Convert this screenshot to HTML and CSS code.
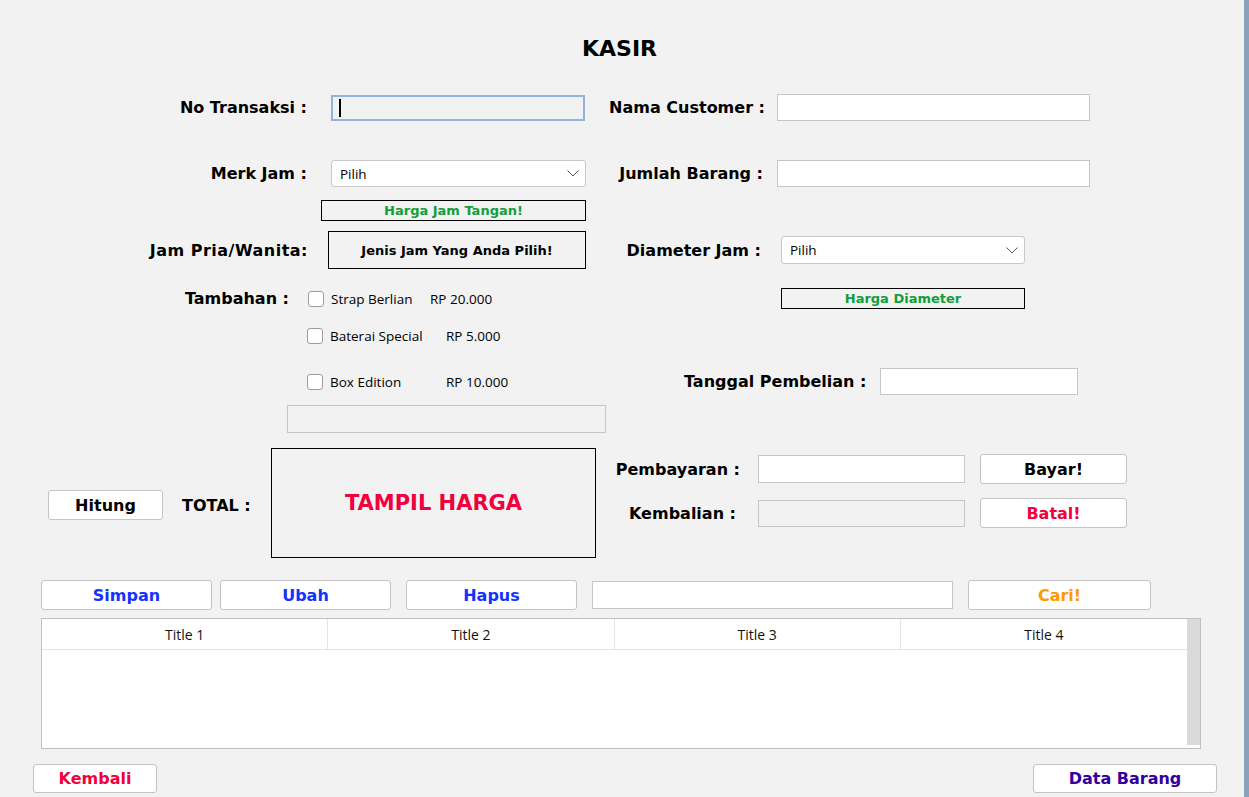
FILE: index.html
```html
<!DOCTYPE html>
<html lang="id">
<head>
<meta charset="utf-8">
<title>Kasir</title>
<link rel="stylesheet" href="styles.css">
</head>
<body>
<div class="window">
  <div class="title">KASIR</div>

  <div class="row r1">
    <div class="lbl w307">No Transaksi :</div>
    <div class="field focused g24 w254 h26"><span class="caret"></span></div>
    <div class="lbl w180">Nama Customer :</div>
    <div class="field g12 w313 h27"></div>
  </div>

  <div class="row r2">
    <div class="lbl w307">Merk Jam :</div>
    <div class="select g24 w255 h27"><span>Pilih</span><svg width="12" height="7" viewBox="0 0 12 7"><polyline points="0.5,0.5 6,6 11.5,0.5" fill="none" stroke="#555" stroke-width="1"/></svg></div>
    <div class="lbl w177">Jumlah Barang :</div>
    <div class="field g14 w313 h27"></div>
  </div>

  <div class="row r2b">
    <div class="info green w265 h21">Harga Jam Tangan!</div>
  </div>

  <div class="row r3">
    <div class="lbl wide w308">Jam Pria/Wanita:</div>
    <div class="info g20 w258 h38">Jenis Jam Yang Anda Pilih!</div>
    <div class="lbl w175">Diameter Jam :</div>
    <div class="select g20 w244 h28"><span>Pilih</span><svg width="12" height="7" viewBox="0 0 12 7"><polyline points="0.5,0.5 6,6 11.5,0.5" fill="none" stroke="#555" stroke-width="1"/></svg></div>
  </div>

  <div class="row r4">
    <div class="zone781">
      <div class="lbl w289">Tambahan :</div>
      <div class="check c1"><span class="box"></span><span class="name n99">Strap Berlian</span><span class="price">RP 20.000</span></div>
    </div>
    <div class="info green w244 h21">Harga Diameter</div>
  </div>

  <div class="row r5">
    <div class="check c2"><span class="box"></span><span class="name n116">Baterai Special</span><span class="price">RP 5.000</span></div>
  </div>

  <div class="row r6">
    <div class="zone684">
      <div class="check c2"><span class="box"></span><span class="name n116">Box Edition</span><span class="price">RP 10.000</span></div>
    </div>
    <div class="lbl w182">Tanggal Pembelian :</div>
    <div class="field g14 w198 h27"></div>
  </div>

  <div class="row r7">
    <div class="field disabled w319 h28"></div>
  </div>

  <div class="row r8">
    <button class="btn low w115 h30">Hitung</button>
    <div class="lbl-l low w89">TOTAL :</div>
    <div class="info big red w325 h110">TAMPIL HARGA</div>
    <div class="paycol">
      <div class="payrow">
        <div class="lbl w144">Pembayaran :</div>
        <div class="field g18 w207 h28"></div>
        <button class="btn g15 w147 h30">Bayar!</button>
      </div>
      <div class="payrow pr2">
        <div class="lbl w140">Kembalian :</div>
        <div class="field disabled g22 w207 h27"></div>
        <button class="btn red g15 w147 h30">Batal!</button>
      </div>
    </div>
  </div>

  <div class="row r9">
    <button class="btn blue w171 h30">Simpan</button>
    <button class="btn blue g8 w171 h30">Ubah</button>
    <button class="btn blue g15 w171 h30">Hapus</button>
    <div class="field g15 w361 h28"></div>
    <button class="btn orange g15 w183 h30">Cari!</button>
  </div>

  <div class="table">
    <div class="tmain">
      <div class="thead">
        <div class="th">Title 1</div>
        <div class="th">Title 2</div>
        <div class="th">Title 3</div>
        <div class="th">Title 4</div>
      </div>
    </div>
    <div class="scroll"></div>
  </div>

  <div class="row bottom">
    <button class="btn red w124 h29">Kembali</button>
    <button class="btn purple w184 h29">Data Barang</button>
  </div>
</div>
</body>
</html>
```

FILE: styles.css
```css
* { box-sizing: border-box; }
html, body { margin: 0; padding: 0; }
body { background: #f2f2f2; width: 1249px; height: 797px; overflow: hidden; }

.window {
  width: 1249px;
  height: 797px;
  background: #f2f2f2;
  border-right: 5px solid #89a3bb;
  display: flex;
  flex-direction: column;
  font-family: "DejaVu Sans", Verdana, sans-serif;
  color: #000;
}

.title {
  margin-top: 36px;
  height: 26px;
  line-height: 26px;
  text-align: center;
  font-weight: bold;
  font-size: 22px;
  padding-right: 5px;
}

.row { display: flex; align-items: center; flex: none; }
.r1 { margin-top: 32px; height: 27px; }
.r2 { margin-top: 39px; height: 27px; }
.r2b { margin-top: 13px; height: 21px; padding-left: 321px; }
.r3 { margin-top: 10px; height: 38px; }
.r4 { margin-top: 19px; height: 21px; }
.r5 { margin-top: 18px; height: 17px; padding-left: 307px; }
.r6 { margin-top: 24px; height: 27px; }
.r7 { margin-top: 10px; height: 28px; padding-left: 287px; }
.r8 { margin-top: 15px; height: 110px; padding-left: 48px; }
.r9 { margin-top: 22px; height: 30px; padding-left: 41px; }
.bottom { margin-top: 15px; height: 29px; padding-left: 33px; padding-right: 27px; justify-content: space-between; }

.lbl {
  flex: none;
  text-align: right;
  font-weight: bold;
  font-size: 16px;
  white-space: nowrap;
}
.lbl.wide { letter-spacing: 0.5px; }
.lbl-l {
  flex: none;
  margin-left: 19px;
  font-weight: bold;
  font-size: 16px;
  white-space: nowrap;
}
.low { margin-top: 4px; }

.zone781 { width: 781px; flex: none; display: flex; align-items: center; height: 100%; }
.zone684 { width: 684px; flex: none; display: flex; align-items: center; padding-left: 307px; height: 100%; }

.field {
  flex: none;
  background: #fff;
  border: 1px solid #c6c6c6;
  position: relative;
  display: flex;
  align-items: center;
}
.field.disabled { background: #f2f2f2; }
.field.focused { background: #f2f2f2; border: 2px solid #92b3dc; }
.caret { display: block; width: 2px; height: 18px; background: #000; margin-left: 6px; }

.select {
  flex: none;
  background: #fff;
  border: 1px solid #c8c8c8;
  border-radius: 3px;
  display: flex;
  align-items: center;
  justify-content: space-between;
  padding: 0 6px 0 8px;
  font-family: "Open Sans", "Noto Sans", sans-serif;
  font-size: 13.5px;
  color: #000;
}
.select svg { display: block; }

.info {
  flex: none;
  border: 1px solid #000;
  display: flex;
  align-items: center;
  justify-content: center;
  font-weight: bold;
  font-size: 13px;
  white-space: nowrap;
}
.info.green { color: #0f9f3b; }
.info.big { font-size: 21px; }
.info.red, .btn.red { color: #f2003d; }

.check { display: flex; align-items: center; flex: none; font-family: "Open Sans", "Noto Sans", sans-serif; font-size: 13.5px; }
.check.c1 { margin-left: 19px; }
.box {
  display: block;
  width: 16px;
  height: 16px;
  background: #fff;
  border: 1px solid #9c9c9c;
  border-radius: 3px;
  margin-right: 7px;
  flex: none;
}
.name { flex: none; white-space: nowrap; }
.n99 { width: 99px; }
.n116 { width: 116px; }
.price { white-space: nowrap; }

.btn {
  flex: none;
  background: #fff;
  border: 1px solid #c4c4c4;
  border-radius: 3px;
  font-family: "DejaVu Sans", Verdana, sans-serif;
  font-weight: bold;
  font-size: 16px;
  color: #000;
  padding: 0;
  display: flex;
  align-items: center;
  justify-content: center;
}
.btn.blue { color: #1432ff; }
.btn.orange { color: #ff9a00; }
.btn.purple { color: #33009c; }

.paycol { display: flex; flex-direction: column; flex: none; align-self: flex-start; padding-top: 6px; }
.payrow { display: flex; align-items: center; height: 30px; }
.pr2 { margin-top: 14px; }

.table {
  flex: none;
  margin-top: 8px;
  margin-left: 41px;
  width: 1160px;
  height: 131px;
  border: 1px solid #c0c0c0;
  background: #fff;
  display: flex;
}
.tmain { flex: 1; }
.thead { display: grid; grid-template-columns: repeat(4, 1fr); height: 31px; border-bottom: 1px solid #e4e4e4; }
.th {
  display: flex;
  align-items: center;
  justify-content: center;
  border-right: 1px solid #e4e4e4;
  font-family: "Open Sans", "Noto Sans", sans-serif;
  font-size: 14px;
  color: #111;
}
.th:last-child { border-right: none; }
.scroll { width: 13px; flex: none; background: #dadada; margin-bottom: 3px; }

.w89 { width: 89px; } .w115 { width: 115px; } .w124 { width: 124px; }
.w140 { width: 140px; } .w144 { width: 144px; } .w147 { width: 147px; }
.w171 { width: 171px; } .w175 { width: 175px; } .w177 { width: 177px; }
.w180 { width: 180px; } .w182 { width: 182px; } .w183 { width: 183px; }
.w184 { width: 184px; } .w198 { width: 198px; } .w207 { width: 207px; }
.w244 { width: 244px; } .w254 { width: 254px; } .w255 { width: 255px; }
.w258 { width: 258px; } .w265 { width: 265px; } .w289 { width: 289px; }
.w307 { width: 307px; } .w308 { width: 308px; } .w313 { width: 313px; }
.w319 { width: 319px; } .w325 { width: 325px; } .w361 { width: 361px; }
.h21 { height: 21px; } .h26 { height: 26px; } .h27 { height: 27px; }
.h28 { height: 28px; } .h29 { height: 29px; } .h30 { height: 30px; }
.h38 { height: 38px; } .h110 { height: 110px; }
.g8 { margin-left: 8px; } .g12 { margin-left: 12px; } .g14 { margin-left: 14px; }
.g15 { margin-left: 15px; } .g18 { margin-left: 18px; } .g20 { margin-left: 20px; }
.g22 { margin-left: 22px; } .g24 { margin-left: 24px; }
```
